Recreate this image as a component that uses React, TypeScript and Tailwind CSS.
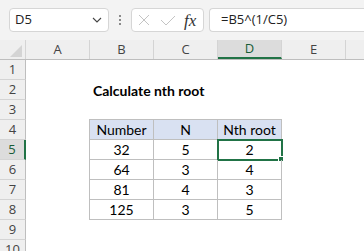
import React from "react";

const cols = ["A", "B", "C", "D", "E", "F"];

type Cell = { text?: string; head?: boolean; table?: boolean; bold?: boolean; left?: boolean };

const table: Record<number, Record<string, Cell>> = {
    2: { B: { text: "Calculate nth root", bold: true, left: true } },
    4: {
        B: { text: "Number", head: true, table: true },
        C: { text: "N", head: true, table: true },
        D: { text: "Nth root", head: true, table: true },
    },
    5: { B: { text: "32", table: true }, C: { text: "5", table: true }, D: { text: "2", table: true } },
    6: { B: { text: "64", table: true }, C: { text: "3", table: true }, D: { text: "4", table: true } },
    7: { B: { text: "81", table: true }, C: { text: "4", table: true }, D: { text: "3", table: true } },
    8: { B: { text: "125", table: true }, C: { text: "3", table: true }, D: { text: "5", table: true } },
};

function Row({ n }: { n: number }) {
    const sel = n === 5;
    return (
        <div className="flex h-[20px]">
            <div
                className={`w-[26px] shrink-0 border-b border-b-[#d4d4d4] flex items-center justify-center text-[13px] ${
                    sel
                        ? "bg-[#dcdcdc] border-r-2 border-r-[#217346] text-[#185c37]"
                        : "bg-[#efefef] border-r border-r-[#bebebe] text-[#444]"
                }`}
                style={{ fontFamily: "'Open Sans', sans-serif" }}
            >
                {n}
            </div>
            {cols.map((c) => {
                const cell = table[n]?.[c];
                if (!cell) return <div key={c} className="w-[64px] shrink-0" />;
                const isSel = sel && c === "D";
                return (
                    <div
                        key={c}
                        className={`relative w-[64px] shrink-0 flex items-center text-[14px] text-black whitespace-nowrap ${
                            cell.left ? "pl-[3px]" : "justify-center"
                        } ${cell.bold ? "font-bold" : ""} ${cell.head ? "bg-[#d9e1f2]" : ""} ${
                            cell.table ? "border-r border-b border-[#bfbfbf]" : ""
                        } ${cell.table && c === "B" ? "border-l -ml-px w-[65px]" : ""} ${
                            cell.table && n === 4 ? "border-t -mt-px h-[21px]" : ""
                        }`}
                        style={{ fontFamily: "Lato, 'Liberation Sans', sans-serif" }}
                    >
                        {cell.text}
                        {isSel && (
                            <>
                                <div className="absolute -left-px -top-px w-[66px] h-[22px] border-2 border-[#217346]" />
                                <div className="absolute right-[-3px] bottom-[-3px] w-[6px] h-[6px] bg-[#217346] border border-white" />
                            </>
                        )}
                    </div>
                );
            })}
        </div>
    );
}

export default function App() {
    return (
        <div className="w-[364px] h-[251px] overflow-hidden bg-white" style={{ fontFamily: "'Open Sans', sans-serif" }}>
            <div className="h-[40px] bg-[#f3f3f3] flex items-center pl-[9px] gap-0">
                <div className="w-[100px] h-[24px] bg-white border border-[#d6d6d6] rounded-[4px] flex items-center justify-between px-[5px] text-[13px] text-[#222]">
                    <span>D5</span>
                    <svg width="10" height="6" viewBox="0 0 10 6" className="mr-[1px]">
                        <path d="M1 1l4 4 4-4" fill="none" stroke="#444" strokeWidth="1.1" />
                    </svg>
                </div>
                <div className="w-[22px] flex flex-col items-center gap-[2px]">
                    <span className="w-[2px] h-[2px] bg-[#8a8a8a]" />
                    <span className="w-[2px] h-[2px] bg-[#8a8a8a]" />
                    <span className="w-[2px] h-[2px] bg-[#8a8a8a]" />
                </div>
                <div className="w-[73px] h-[24px] bg-white border border-[#d6d6d6] rounded-[4px] flex items-center pl-[6px] gap-[10px]">
                    <svg width="12" height="12" viewBox="0 0 12 12">
                        <path d="M1 1l10 10M11 1L1 11" stroke="#c4c4c4" strokeWidth="1" />
                    </svg>
                    <svg width="16" height="11" viewBox="0 0 16 11">
                        <path d="M1 5l5 5 9-9" fill="none" stroke="#c4c4c4" strokeWidth="1" />
                    </svg>
                    <span
                        className="-ml-[2px] text-[17px] italic text-[#333] leading-none"
                        style={{ fontFamily: "'Liberation Serif', serif" }}
                    >
                        fx
                    </span>
                </div>
                <div className="ml-[5px] flex-1 h-[24px] bg-white border border-r-0 border-[#d6d6d6] rounded-l-[4px] flex items-center pl-[11px] text-[13px] text-[#222]">
                    =B5^(1/C5)
                </div>
            </div>
            <div className="flex h-[20px] bg-[#efefef] border-b border-[#bebebe]">
                <div className="relative w-[26px] shrink-0 border-r border-[#d4d4d4]">
                    <svg width="12" height="12" viewBox="0 0 12 12" className="absolute right-[3px] bottom-[2px]">
                        <path d="M12 0V12H0Z" fill="#d4d4d4" />
                    </svg>
                </div>
                {cols.map((c) => (
                    <div
                        key={c}
                        className={`w-[64px] shrink-0 flex items-center justify-center text-[13px] border-r border-[#d4d4d4] ${
                            c === "D" ? "bg-[#dcdcdc] text-[#185c37] border-b-2 border-b-[#217346]" : "text-[#444]"
                        }`}
                    >
                        {c}
                    </div>
                ))}
            </div>
            {Array.from({ length: 10 }, (_, i) => (
                <Row key={i} n={i + 1} />
            ))}
        </div>
    );
}
